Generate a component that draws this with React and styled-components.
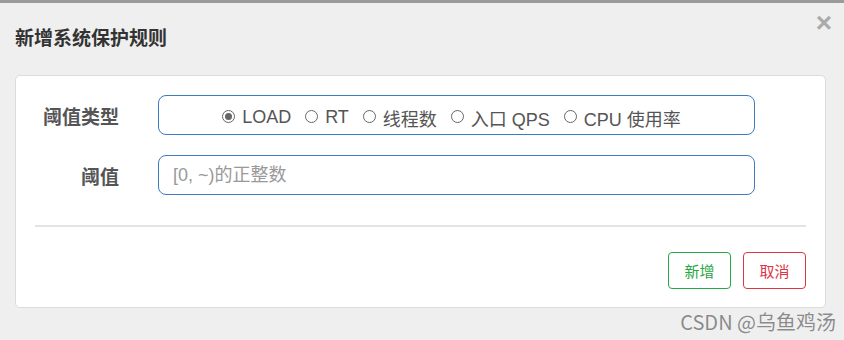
import React, { useState } from 'react';
import styled, { createGlobalStyle } from 'styled-components';

const GlobalStyle = createGlobalStyle`
  html, body {
    margin: 0;
    padding: 0;
    background: #efefef;
    font-family: "Liberation Sans", "Noto Sans CJK SC", Arial, sans-serif;
  }
`;

const Dialog = styled.div`
  position: relative;
  width: 844px;
  height: 340px;
  box-sizing: border-box;
  border-top: 3px solid #9a9a9a;
  background: #efefef;
  padding: 0 18px 0 15px;
`;

const Header = styled.div`
  display: flex;
  align-items: center;
  height: 72px;
`;

const Title = styled.h3`
  margin: -6px 0 0 0;
  font-family: "Noto Sans CJK SC", sans-serif;
  font-size: 19px;
  font-weight: bold;
  color: #333;
`;

const Close = styled.span`
  position: absolute;
  top: 6px;
  right: 12px;
  font-family: "Liberation Sans", Arial, sans-serif;
  font-size: 28px;
  font-weight: bold;
  color: #aaa;
  line-height: 28px;
`;

const Card = styled.div`
  background: #fff;
  border: 1px solid #dcdcdc;
  border-radius: 5px;
  height: 233px;
  box-sizing: border-box;
  padding: 19px 19px 0 19px;
`;

const Row = styled.div`
  display: flex;
  align-items: center;
  margin-bottom: ${props => props.gap || 0}px;
`;

const Label = styled.label`
  width: 84px;
  padding-right: 39px;
  text-align: right;
  font-family: "Noto Sans CJK SC", sans-serif;
  font-size: 19px;
  font-weight: bold;
  color: #555;
  white-space: nowrap;
`;

const Field = styled.div`
  width: 597px;
  height: 40px;
  box-sizing: border-box;
  border: 1px solid #3a7cbf;
  border-radius: 8px;
  display: flex;
  align-items: center;
  justify-content: ${props => props.center ? 'center' : 'flex-start'};
  padding: ${props => props.center ? '0 24px 0 14px' : '0 14px'};
`;

const Input = styled.input`
  border: none;
  outline: none;
  width: 100%;
  font-family: "Liberation Sans", "Noto Sans CJK SC", sans-serif;
  font-size: 18px;
  color: #555;
  padding: 0;
  &::placeholder {
    color: #999;
  }
`;

const Option = styled.label`
  display: flex;
  align-items: center;
  margin: 0 7px;
  padding-top: 5px;
  font-size: 18px;
  color: #555;
  font-family: "Liberation Sans", "Noto Sans CJK SC", sans-serif;
`;

const Radio = styled.input`
  appearance: none;
  width: 13px;
  height: 13px;
  border: 1px solid #666;
  border-radius: 50%;
  margin: -2px 7px 0 0;
  box-sizing: border-box;
  position: relative;
  background: #fff;
  &:checked::after {
    content: '';
    position: absolute;
    left: 2px;
    top: 2px;
    width: 7px;
    height: 7px;
    border-radius: 50%;
    background: #666;
  }
`;

const Divider = styled.hr`
  border: none;
  border-top: 2px solid #e3e3e3;
  margin: 30px 0 0 0;
`;

const Footer = styled.div`
  display: flex;
  justify-content: flex-end;
  gap: 12px;
  margin-top: 25px;
`;

const Button = styled.button`
  width: 63px;
  height: 37px;
  background: #fff;
  border: 1px solid ${props => props.color};
  color: ${props => props.color};
  border-radius: 4px;
  font-family: "Noto Sans CJK SC", sans-serif;
  font-size: 15px;
  padding: 0;
  cursor: pointer;
`;

const Watermark = styled.div`
  position: absolute;
  right: 8px;
  bottom: 4px;
  font-family: "Noto Sans CJK SC", sans-serif;
  font-size: 20px;
  color: #8a8a8a;
  text-shadow: 0 0 1px #fff;
`;

const options = ['LOAD', 'RT', '线程数', '入口 QPS', 'CPU 使用率'];

export default function App() {
  const [grade, setGrade] = useState('LOAD');

  return (
    <>
      <GlobalStyle />
      <Dialog>
        <Header>
          <Title>新增系统保护规则</Title>
        </Header>
        <Close>×</Close>
        <Card>
          <Row gap={20}>
            <Label>阈值类型</Label>
            <Field center>
              {options.map(opt => (
                <Option key={opt}>
                  <Radio
                    type="radio"
                    name="grade"
                    checked={grade === opt}
                    onChange={() => setGrade(opt)}
                  />
                  {opt}
                </Option>
              ))}
            </Field>
          </Row>
          <Row>
            <Label>阈值</Label>
            <Field>
              <Input placeholder="[0, ~)的正整数" />
            </Field>
          </Row>
          <Divider />
          <Footer>
            <Button color="#28a745">新增</Button>
            <Button color="#dc3545">取消</Button>
          </Footer>
        </Card>
        <Watermark>CSDN @乌鱼鸡汤</Watermark>
      </Dialog>
    </>
  );
}
